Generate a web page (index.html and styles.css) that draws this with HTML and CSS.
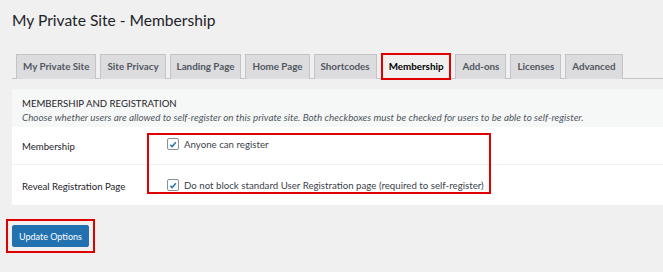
FILE: index.html
```html
<!DOCTYPE html>
<html lang="en">
<head>
<meta charset="utf-8">
<title>My Private Site - Membership</title>
<link rel="stylesheet" href="styles.css">
</head>
<body>
<div class="wrap">
  <h1 class="title">My Private Site - Membership</h1>
  <nav class="tabs">
    <a class="tab">My Private Site</a>
    <a class="tab">Site Privacy</a>
    <a class="tab">Landing Page</a>
    <a class="tab">Home Page</a>
    <a class="tab">Shortcodes</a>
    <a class="tab tab-active">Membership</a>
    <a class="tab">Add-ons</a>
    <a class="tab">Licenses</a>
    <a class="tab">Advanced</a>
  </nav>
  <div class="panel">
    <div class="section-head">
      <h2 class="section-title">MEMBERSHIP AND REGISTRATION</h2>
      <p class="section-desc">Choose whether users are allowed to self-register on this private site. Both checkboxes must be checked for users to be able to self-register.</p>
    </div>
    <div class="rows">
      <div class="row">
        <div class="label">Membership</div>
        <label class="field"><span class="cb"><svg viewBox="0 0 12 12" width="11" height="11"><path d="M2.8 6.2 L5 8.5 L9.4 3.4" fill="none" stroke="#2271b1" stroke-width="1.7"/></svg></span>Anyone can register</label>
      </div>
      <div class="row row-2">
        <div class="label">Reveal Registration Page</div>
        <label class="field"><span class="cb"><svg viewBox="0 0 12 12" width="11" height="11"><path d="M2.8 6.2 L5 8.5 L9.4 3.4" fill="none" stroke="#2271b1" stroke-width="1.7"/></svg></span>Do not block standard User Registration page (required to self-register)</label>
      </div>
      <div class="annot-fields"></div>
    </div>
  </div>
  <div class="submit">
    <div class="annot-btn"><button class="btn">Update Options</button></div>
  </div>
</div>
</body>
</html>
```
FILE: styles.css
```css
html, body {
  margin: 0;
  padding: 0;
  background: #f0f0f1;
  font-family: Lato, "Noto Sans", sans-serif;
  color: #1d2327;
}
.wrap {
  padding: 0 0 0 12px;
}
.title {
  margin: 0;
  padding: 9px 0 0 0;
  font-size: 15.6px;
  font-weight: 400;
  line-height: 22px;
  height: 45px;
}
.tabs {
  display: flex;
  gap: 4px;
  padding-left: 4px;
  border-bottom: 1px solid #c3c4c7;
  height: 24px;
  align-items: flex-end;
}
.tab {
  box-sizing: border-box;
  padding: 0 6px;
  background: #dcdcde;
  border: 1px solid #c3c4c7;
  border-bottom: none;
  font-size: 9.8px;
  font-weight: 700;
  color: #50575e;
  line-height: 23px;
  margin-bottom: -1px;
  height: 25px;
  white-space: nowrap;
}
.tab-active {
  background: #f0f0f1;
  color: #000;
  border: 2px solid #e00000;
  height: 27px;
  margin-bottom: -2px;
  line-height: 22px;
  padding: 0 6px;
}
.panel {
  margin-top: 10px;
  background: #fff;
}
.section-head {
  background: #f6f7f7;
  height: 38px;
  box-sizing: border-box;
  padding: 8px 10px 0;
}
.section-title {
  margin: 0;
  font-size: 9.6px;
  font-weight: 400;
  line-height: 13px;
}
.section-desc {
  margin: 0;
  font-size: 9.85px;
  font-style: italic;
  color: #50575e;
  line-height: 14px;
  white-space: nowrap;
}
.rows {
  position: relative;
}
.row {
  display: flex;
  height: 38px;
  border-bottom: 1px solid #f0f0f1;
  box-sizing: border-box;
}
.row-2 {
  height: 40px;
  border-bottom: none;
  align-items: center;
}
.label {
  width: 145px;
  padding-left: 10px;
  box-sizing: border-box;
  font-size: 9.6px;
  line-height: 38px;
  padding-top: 1px;
  white-space: nowrap;
}
.row-2 .label {
  line-height: 20px;
  padding-top: 3px;
}
.field {
  display: flex;
  align-items: center;
  gap: 5px;
  font-size: 9.7px;
  color: #3c434a;
  height: 20px;
  margin-top: 7px;
  white-space: nowrap;
}
.row-2 .field {
  margin-top: 0;
}
.cb {
  width: 10px;
  height: 10px;
  border: 1px solid #8c8f94;
  border-radius: 2px;
  display: inline-flex;
  align-items: center;
  justify-content: center;
  background: #fff;
  margin-left: 10px;
}
.annot-fields {
  position: absolute;
  left: 135px;
  top: 6px;
  width: 340px;
  height: 57px;
  border: 2px solid #e00000;
  pointer-events: none;
}
.submit {
  padding: 14px 0 0 0;
  margin-left: -6px;
}
.annot-btn {
  display: inline-block;
  border: 2px solid #e00000;
  padding: 4px 4px;
}
.btn {
  display: block;
  background: #2271b1;
  color: #fff;
  border: 1px solid #2271b1;
  border-radius: 2px;
  font-family: Lato, "Noto Sans", sans-serif;
  font-size: 9px;
  height: 22px;
  padding: 0 6px;
}
```
